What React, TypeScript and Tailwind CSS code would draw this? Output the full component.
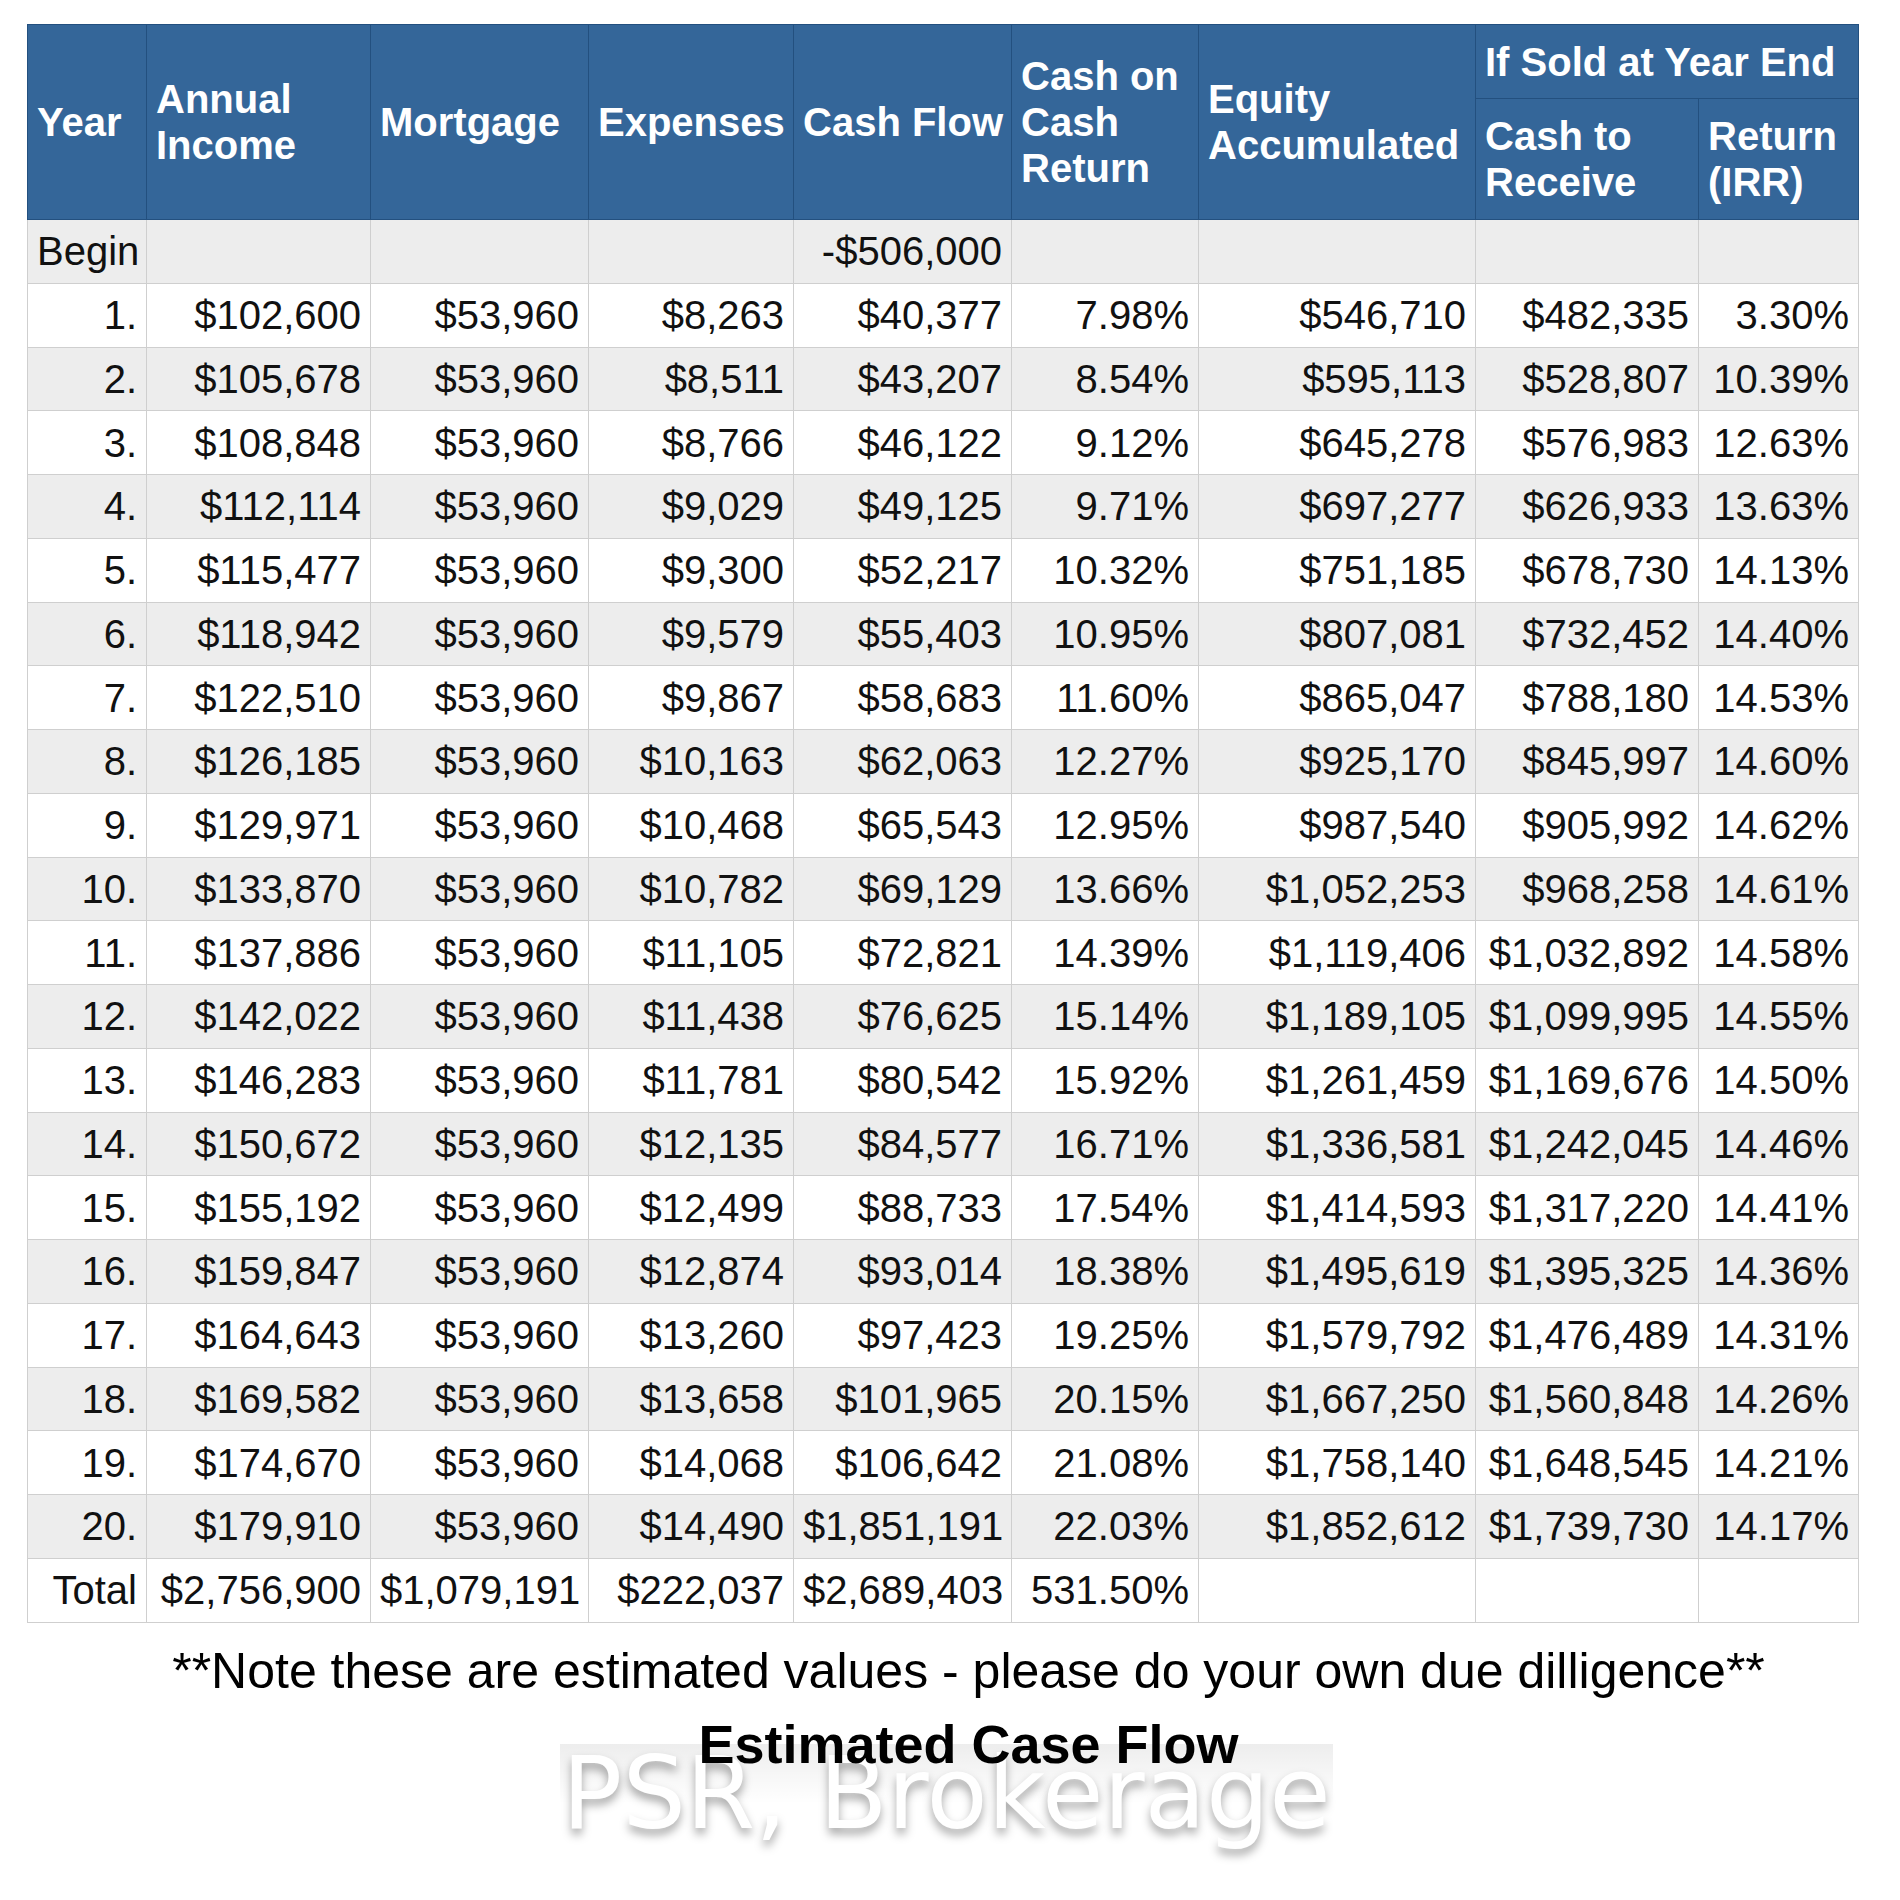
import React from 'react';

type Row = string[];

const rows: Row[] = [
    ['1.', '$102,600', '$53,960', '$8,263', '$40,377', '7.98%', '$546,710', '$482,335', '3.30%'],
    ['2.', '$105,678', '$53,960', '$8,511', '$43,207', '8.54%', '$595,113', '$528,807', '10.39%'],
    ['3.', '$108,848', '$53,960', '$8,766', '$46,122', '9.12%', '$645,278', '$576,983', '12.63%'],
    ['4.', '$112,114', '$53,960', '$9,029', '$49,125', '9.71%', '$697,277', '$626,933', '13.63%'],
    ['5.', '$115,477', '$53,960', '$9,300', '$52,217', '10.32%', '$751,185', '$678,730', '14.13%'],
    ['6.', '$118,942', '$53,960', '$9,579', '$55,403', '10.95%', '$807,081', '$732,452', '14.40%'],
    ['7.', '$122,510', '$53,960', '$9,867', '$58,683', '11.60%', '$865,047', '$788,180', '14.53%'],
    ['8.', '$126,185', '$53,960', '$10,163', '$62,063', '12.27%', '$925,170', '$845,997', '14.60%'],
    ['9.', '$129,971', '$53,960', '$10,468', '$65,543', '12.95%', '$987,540', '$905,992', '14.62%'],
    ['10.', '$133,870', '$53,960', '$10,782', '$69,129', '13.66%', '$1,052,253', '$968,258', '14.61%'],
    ['11.', '$137,886', '$53,960', '$11,105', '$72,821', '14.39%', '$1,119,406', '$1,032,892', '14.58%'],
    ['12.', '$142,022', '$53,960', '$11,438', '$76,625', '15.14%', '$1,189,105', '$1,099,995', '14.55%'],
    ['13.', '$146,283', '$53,960', '$11,781', '$80,542', '15.92%', '$1,261,459', '$1,169,676', '14.50%'],
    ['14.', '$150,672', '$53,960', '$12,135', '$84,577', '16.71%', '$1,336,581', '$1,242,045', '14.46%'],
    ['15.', '$155,192', '$53,960', '$12,499', '$88,733', '17.54%', '$1,414,593', '$1,317,220', '14.41%'],
    ['16.', '$159,847', '$53,960', '$12,874', '$93,014', '18.38%', '$1,495,619', '$1,395,325', '14.36%'],
    ['17.', '$164,643', '$53,960', '$13,260', '$97,423', '19.25%', '$1,579,792', '$1,476,489', '14.31%'],
    ['18.', '$169,582', '$53,960', '$13,658', '$101,965', '20.15%', '$1,667,250', '$1,560,848', '14.26%'],
    ['19.', '$174,670', '$53,960', '$14,068', '$106,642', '21.08%', '$1,758,140', '$1,648,545', '14.21%'],
    ['20.', '$179,910', '$53,960', '$14,490', '$1,851,191', '22.03%', '$1,852,612', '$1,739,730', '14.17%'],
];

const totals: Row = ['Total', '$2,756,900', '$1,079,191', '$222,037', '$2,689,403', '531.50%', '', '', ''];

const colWidths = [119, 224, 218, 205, 218, 187, 277, 223, 160];

const th = 'border border-[#23507f] px-[9px] text-left align-middle font-bold text-white leading-[46px]';
const td = 'border border-[#cfcfcf] px-[9px] text-right align-middle whitespace-nowrap';

export default function App() {
    return (
        <div className="min-h-[1900px] w-[1900px] bg-white pl-[27px] pt-[24px] font-['Liberation_Sans',Arial,sans-serif] text-[#111]">
            <table className="w-[1831px] table-fixed border-collapse text-[40px]">
                <colgroup>
                    {colWidths.map((w, i) => (
                        <col key={i} style={{ width: w }} />
                    ))}
                </colgroup>
                <thead className="bg-[#346699]">
                    <tr className="h-[74px]">
                        <th rowSpan={2} className={th}>Year</th>
                        <th rowSpan={2} className={th}>Annual<br />Income</th>
                        <th rowSpan={2} className={th}>Mortgage</th>
                        <th rowSpan={2} className={`${th} whitespace-nowrap`}>Expenses</th>
                        <th rowSpan={2} className={`${th} whitespace-nowrap`}>Cash Flow</th>
                        <th rowSpan={2} className={th}>Cash on<br />Cash<br />Return</th>
                        <th rowSpan={2} className={th}>Equity<br />Accumulated</th>
                        <th colSpan={2} className={`${th} text-center whitespace-nowrap`}>If Sold at Year End</th>
                    </tr>
                    <tr className="h-[121px]">
                        <th className={th}>Cash to<br />Receive</th>
                        <th className={th}>Return<br />(IRR)</th>
                    </tr>
                </thead>
                <tbody>
                    <tr className="h-[63.75px] bg-[#ededed]">
                        <td className={`${td} text-left`}>Begin</td>
                        <td className={td} />
                        <td className={td} />
                        <td className={td} />
                        <td className={td}>-$506,000</td>
                        <td className={td} />
                        <td className={td} />
                        <td className={td} />
                        <td className={td} />
                    </tr>
                    {rows.map((r, i) => (
                        <tr key={i} className={`h-[63.75px] ${i % 2 === 0 ? 'bg-white' : 'bg-[#ededed]'}`}>
                            {r.map((c, j) => (
                                <td key={j} className={td}>{c}</td>
                            ))}
                        </tr>
                    ))}
                    <tr className="h-[63.75px] bg-white">
                        {totals.map((c, j) => (
                            <td key={j} className={td}>{c}</td>
                        ))}
                    </tr>
                </tbody>
            </table>

            {/* Footer notes */}
            <div className="ml-[26px] mt-[18px] w-[1831px] text-center text-[50px] leading-[60px] text-black">
                **Note these are estimated values - please do your own due dilligence**
            </div>
            <div className="relative z-10 ml-[26px] mt-[13px] w-[1831px] text-center text-[54px] font-bold leading-[60px] text-black">
                Estimated Case Flow
            </div>
            <div className="-mt-[30px] ml-[4px] flex w-[1831px] justify-center">
                <div className="bg-gradient-to-b from-black/[0.07] to-transparent to-60% px-[2px] font-['DejaVu_Sans',sans-serif] text-[100px] leading-[100px] text-white [text-shadow:0_6px_10px_rgba(0,0,0,0.35)]">
                    PSR, Brokerage
                </div>
            </div>
        </div>
    );
}
